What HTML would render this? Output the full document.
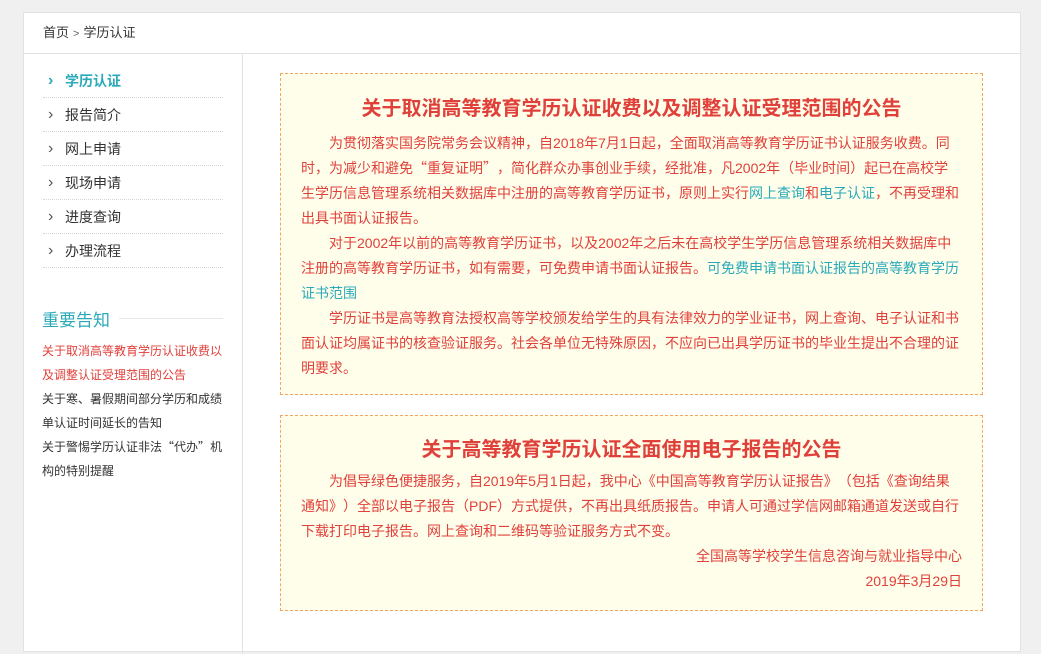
<!DOCTYPE html>
<html><head><meta charset="utf-8"><style>
*{margin:0;padding:0;box-sizing:border-box}
html,body{text-spacing-trim:space-all}
body{width:1041px;height:630px;overflow:hidden;background:#f0f0f0;font-family:"Liberation Sans","Noto Sans CJK SC",sans-serif;position:relative}
.wrap{position:absolute;left:23px;top:12px;width:998px;height:640px;background:#fff;border:1px solid #e2e2e2}
.crumb{height:41px;border-bottom:1px solid #e2e2e2;padding-left:19px;font-size:13px;line-height:40px;color:#333}
.crumb span{color:#666;font-size:11px;margin:0 4px}
.side{position:absolute;left:0;top:41px;width:219px;height:600px;border-right:1px solid #e2e2e2}
.menu{position:absolute;left:19px;top:10px;width:180px;list-style:none}
.menu li{height:34px;line-height:35px;border-bottom:1px dotted #d6d6d6;font-size:14px;color:#333;padding-left:22px;position:relative}
.menu li:before{content:"›";position:absolute;left:5px;top:-1px;font-size:16px;color:#555}
.menu li.on{color:#2aa9b9;font-weight:bold}
.menu li.on:before{color:#2aa9b9}
.nt{position:absolute;left:18px;top:252px;width:181px;font-size:17px;color:#2aa9b9}
.nt:after{content:"";position:absolute;left:77px;right:0;top:12px;border-top:1px solid #e6e6e6}
.nl{position:absolute;left:18px;top:285px;width:181px;font-size:12px;line-height:24px;color:#333}
.nl .r{color:#e0403a}
.box{position:absolute;left:280px;width:703px;background:#fffeeb;border:1px dashed #f4a460;padding:0 20px;color:#e0403a;font-size:14px;line-height:25px}
.box h2{text-align:center;font-size:20px;font-weight:bold;line-height:28px}
.box p{text-indent:2em}
.box a{color:#2aa9b9;text-decoration:none}
.q{font-family:"Noto Sans CJK SC",sans-serif}
.right{text-align:right}
</style></head><body>
<div class="wrap">
<div class="crumb">首页<span>&gt;</span>学历认证</div>
<div class="side">
<ul class="menu">
<li class="on">学历认证</li><li>报告简介</li><li>网上申请</li><li>现场申请</li><li>进度查询</li><li>办理流程</li>
</ul>
<div class="nt">重要告知</div>
<div class="nl"><div class="r">关于取消高等教育学历认证收费以及调整认证受理范围的公告</div><div>关于寒、暑假期间部分学历和成绩单认证时间延长的告知</div><div>关于警惕学历认证非法<span class="q">“</span>代办<span class="q">”</span>机构的特别提醒</div></div>
</div>
</div>
<div class="box" style="top:73px;height:322px;padding-top:21px">
<h2>关于取消高等教育学历认证收费以及调整认证受理范围的公告</h2>
<p style="margin-top:8px">为贯彻落实国务院常务会议精神，自2018年7月1日起，全面取消高等教育学历证书认证服务收费。同时，为减少和避免<span class="q">“</span>重复证明<span class="q">”</span>，简化群众办事创业手续，经批准，凡2002年（毕业时间）起已在高校学生学历信息管理系统相关数据库中注册的高等教育学历证书，原则上实行<a>网上查询</a>和<a>电子认证</a>，不再受理和出具书面认证报告。</p>
<p>对于2002年以前的高等教育学历证书，以及2002年之后未在高校学生学历信息管理系统相关数据库中注册的高等教育学历证书，如有需要，可免费申请书面认证报告。<a>可免费申请书面认证报告的高等教育学历证书范围</a></p>
<p>学历证书是高等教育法授权高等学校颁发给学生的具有法律效力的学业证书，网上查询、电子认证和书面认证均属证书的核查验证服务。社会各单位无特殊原因，不应向已出具学历证书的毕业生提出不合理的证明要求。</p>
</div>
<div class="box" style="top:415px;height:196px;padding-top:20px">
<h2>关于高等教育学历认证全面使用电子报告的公告</h2>
<p style="margin-top:5px">为倡导绿色便捷服务，自2019年5月1日起，我中心《中国高等教育学历认证报告》（包括《查询结果通知》）全部以电子报告（PDF）方式提供，不再出具纸质报告。申请人可通过学信网邮箱通道发送或自行下载打印电子报告。网上查询和二维码等验证服务方式不变。</p>
<div class="right">全国高等学校学生信息咨询与就业指导中心</div>
<div class="right">2019年3月29日</div>
</div>
</body></html>
